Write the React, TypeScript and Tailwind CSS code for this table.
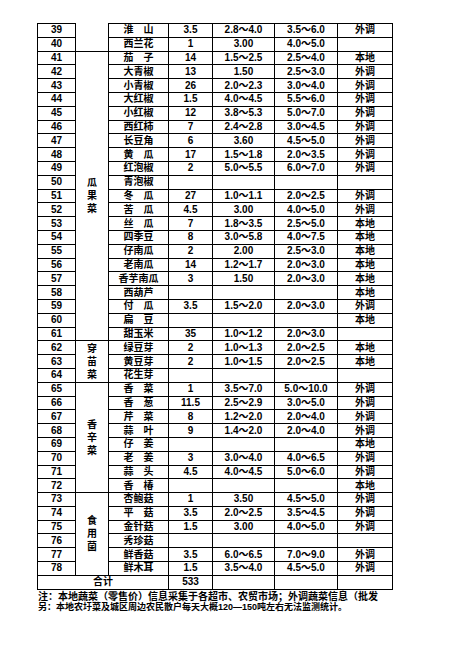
type Row = [number, string, string, string, string, string]

const rows: Row[] = [
  [39, '淮　山', '3.5', '2.8～4.0', '3.5～6.0', '外调'],
  [40, '西兰花', '1', '3.00', '4.0～5.0', ''],
  [41, '茄　子', '14', '1.5～2.5', '2.5～4.0', '本地'],
  [42, '大青椒', '13', '1.50', '2.5～3.0', '外调'],
  [43, '小青椒', '26', '2.0～2.3', '3.0～4.0', '外调'],
  [44, '大红椒', '1.5', '4.0～4.5', '5.5～6.0', '外调'],
  [45, '小红椒', '12', '3.8～5.3', '5.0～7.0', '外调'],
  [46, '西红柿', '7', '2.4～2.8', '3.0～4.5', '外调'],
  [47, '长豆角', '6', '3.60', '4.5～5.0', '外调'],
  [48, '黄　瓜', '17', '1.5～1.8', '2.0～3.5', '外调'],
  [49, '红泡椒', '2', '5.0～5.5', '6.0～7.0', '外调'],
  [50, '青泡椒', '', '', '', ''],
  [51, '冬　瓜', '27', '1.0～1.1', '2.0～2.5', '外调'],
  [52, '苦　瓜', '4.5', '3.00', '4.0～5.0', '外调'],
  [53, '丝　瓜', '7', '1.8～3.5', '2.5～5.0', '本地'],
  [54, '四季豆', '8', '3.0～5.8', '4.0～7.5', '本地'],
  [55, '仔南瓜', '2', '2.00', '2.5～3.0', '本地'],
  [56, '老南瓜', '14', '1.2～1.7', '2.0～3.0', '本地'],
  [57, '香芋南瓜', '3', '1.50', '2.0～3.0', '本地'],
  [58, '西葫芦', '', '', '', '本地'],
  [59, '付　瓜', '3.5', '1.5～2.0', '2.0～3.0', '外调'],
  [60, '扁　豆', '', '', '', '本地'],
  [61, '甜玉米', '35', '1.0～1.2', '2.0～3.0', ''],
  [62, '绿豆芽', '2', '1.0～1.3', '2.0～2.5', '本地'],
  [63, '黄豆芽', '2', '1.0～1.5', '2.0～2.5', '本地'],
  [64, '花生芽', '', '', '', ''],
  [65, '香　菜', '1', '3.5～7.0', '5.0～10.0', '外调'],
  [66, '香　葱', '11.5', '2.5～2.9', '3.0～5.0', '外调'],
  [67, '芹　菜', '8', '1.2～2.0', '2.0～4.0', '外调'],
  [68, '蒜　叶', '9', '1.4～2.0', '2.0～4.0', '外调'],
  [69, '仔　姜', '', '', '', '本地'],
  [70, '老　姜', '3', '3.0～4.0', '4.0～6.5', '外调'],
  [71, '蒜　头', '4.5', '4.0～4.5', '5.0～6.0', '外调'],
  [72, '香　椿', '', '', '', '本地'],
  [73, '杏鲍菇', '1', '3.50', '4.5～5.0', '外调'],
  [74, '平　菇', '3.5', '2.0～2.5', '3.5～4.5', '外调'],
  [75, '金针菇', '1.5', '3.00', '4.0～5.0', '外调'],
  [76, '秀珍菇', '', '', '', ''],
  [77, '鲜香菇', '3.5', '6.0～6.5', '7.0～9.0', '外调'],
  [78, '鲜木耳', '1.5', '3.5～4.0', '4.5～5.0', '外调'],
]

// 类别合并单元格：起始序号 -> 跨行数与文字
const groups: Record<number, { span: number; text: string }> = {
  39: { span: 2, text: '' },
  41: { span: 21, text: '瓜果菜' },
  62: { span: 3, text: '穿苗菜' },
  65: { span: 8, text: '香辛菜' },
  73: { span: 6, text: '食用菌' },
}

const cell = 'border border-black p-0 h-[13.8px] text-center align-middle leading-none whitespace-nowrap'

export default function App() {
  return (
    <div
      className="w-[461px] h-[654px] bg-white text-black pl-[37px] pt-[23px] font-bold"
      style={{ fontFamily: '"Liberation Sans", "Noto Sans CJK SC", sans-serif' }}
    >
      <table className="table-fixed border-collapse w-[355px] text-[10px]">
        <colgroup>
          <col className="w-[38px]" />
          <col className="w-[33px]" />
          <col className="w-[60px]" />
          <col className="w-[44px]" />
          <col className="w-[62px]" />
          <col className="w-[63px]" />
          <col className="w-[55px]" />
        </colgroup>
        <tbody>
          {rows.map(([no, name, qty, buy, sell, src]) => {
            const g = groups[no]
            return (
              <tr key={no}>
                <td className={cell}>{no}</td>
                {g && (
                  <td
                    rowSpan={g.span}
                    className={`border-x border-b border-black p-0 text-center align-middle ${no === 39 ? 'border-t-0' : 'border-t'}`}
                  >
                    <div className="flex flex-col items-center leading-[13px]">
                      {g.text.split('').map((c, i) => (
                        <span key={i}>{c}</span>
                      ))}
                    </div>
                  </td>
                )}
                <td className={cell}>{name}</td>
                <td className={cell}>{qty}</td>
                <td className={cell}>{buy}</td>
                <td className={cell}>{sell}</td>
                <td className={cell}>{src}</td>
              </tr>
            )
          })}
          <tr>
            <td colSpan={3} className={cell}>合计</td>
            <td className={cell}>533</td>
            <td className={cell}></td>
            <td className={cell}></td>
            <td className={cell}></td>
          </tr>
        </tbody>
      </table>
      <div className="whitespace-nowrap mt-[1px] pl-[1px]">
        <div className="text-[10px] leading-[11px]">
          注：本地蔬菜（零售价）信息采集于各超市、农贸市场；外调蔬菜信息（批发
        </div>
        <div className="text-[9px] leading-[11px]">
          另：本地农圩菜及城区周边农民散户每天大概120—150吨左右无法监测统计。
        </div>
      </div>
    </div>
  )
}
